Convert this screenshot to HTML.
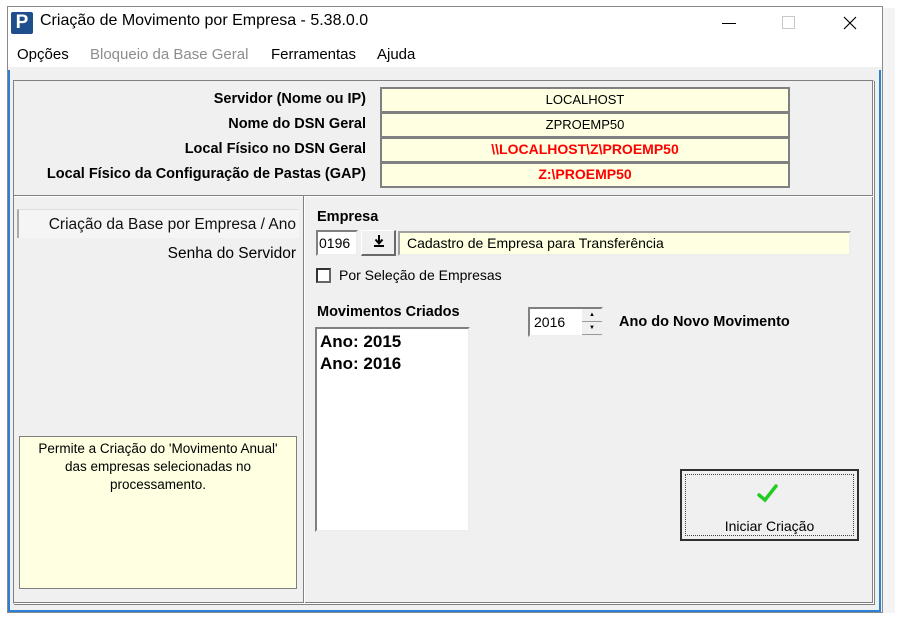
<!DOCTYPE html>
<html><head><meta charset="utf-8"><style>
*{margin:0;padding:0;box-sizing:border-box}
body{width:899px;height:619px;background:#fff;position:relative;overflow:hidden;font-family:"Liberation Sans",sans-serif;font-size:13px;color:#000}
.a{position:absolute}
.b{font-weight:bold}
.r{text-align:right}
.c{text-align:center}
.cell{position:absolute;left:380px;width:410px;height:26px;background:#ffffe1;border:2px solid #808080;text-align:center;line-height:21px;font-size:13px}
.red{color:#f00;font-weight:bold;font-size:14px}
.hl{font-size:14.5px}
</style></head><body>
<div class="a" style="left:7px;top:6px;width:876px;height:607px;border:1px solid #8a8a8a;background:#fff"></div>
<div class="a" style="left:883px;top:8px;width:12px;height:605px;background:#f4f4f4"></div>
<div class="a" style="left:11px;top:12px;width:22px;height:22px;background:#1f4e8c;border-radius:2px;color:#fff;font-weight:bold;font-size:19px;line-height:22px;text-align:center">P</div>
<div class="a" style="left:40px;top:12px;font-size:16px">Criação de Movimento por Empresa - 5.38.0.0</div>
<div class="a" style="left:722px;top:23px;width:14px;height:1px;background:#000"></div>
<div class="a" style="left:782px;top:16px;width:13px;height:13px;border:1px solid #c8c8c8"></div>
<svg class="a" style="left:843px;top:16px" width="14" height="14"><path d="M1 1L13 13M13 1L1 13" stroke="#000" stroke-width="1.2"/></svg>
<div class="a" style="left:17px;top:46px;font-size:15px">Opções</div>
<div class="a" style="left:90px;top:46px;font-size:15px;color:#8d8d8d">Bloqueio da Base Geral</div>
<div class="a" style="left:271px;top:46px;font-size:15px">Ferramentas</div>
<div class="a" style="left:377px;top:46px;font-size:15px">Ajuda</div>
<div class="a" style="left:8px;top:67px;width:874px;height:545px;background:#f0f0f0"></div>
<div class="a" style="left:8px;top:70px;width:2px;height:542px;background:#2b7fd4"></div>
<div class="a" style="left:879px;top:70px;width:2px;height:542px;background:#2b7fd4"></div>
<div class="a" style="left:8px;top:610px;width:873px;height:2px;background:#2b7fd4"></div>
<div class="a" style="left:13px;top:80px;width:861px;height:524px;border:1px solid #808080;border-right-color:#fff;border-bottom-color:#fff;box-shadow:inset -1px -1px 0 #808080,1px 1px 0 #808080"></div>
<div class="a b r hl" style="left:20px;width:346px;top:91px">Servidor (Nome ou IP)</div>
<div class="a b r hl" style="left:20px;width:346px;top:116px">Nome do DSN Geral</div>
<div class="a b r hl" style="left:20px;width:346px;top:141px">Local Físico no DSN Geral</div>
<div class="a b r hl" style="left:20px;width:346px;top:166px">Local Físico da Configuração de Pastas (GAP)</div>
<div class="cell" style="top:87px">LOCALHOST</div>
<div class="cell" style="top:112px">ZPROEMP50</div>
<div class="cell red" style="top:137px">\\LOCALHOST\Z\PROEMP50</div>
<div class="cell red" style="top:162px">Z:\PROEMP50</div>
<div class="a" style="left:14px;top:195px;width:859px;height:2px;border-top:1px solid #808080;border-bottom:1px solid #fff"></div>
<div class="a" style="left:303px;top:196px;width:2px;height:407px;border-left:1px solid #808080;border-right:1px solid #fff"></div>
<div class="a r" style="left:17px;top:209px;width:282px;height:29px;background:#f5f5f5;border-left:2px solid #aaa;border-top:1px solid #ddd;padding:6px 3px 0 0;font-size:15.5px;color:#111">Criação da Base por Empresa / Ano</div>
<div class="a r" style="left:17px;top:245px;width:279px;font-size:15.5px">Senha do Servidor</div>
<div class="a c" style="left:19px;top:436px;width:278px;height:153px;background:#ffffe1;border:1px solid #808080;padding-top:3px;line-height:18px;font-size:13.5px">Permite a Criação do 'Movimento Anual'<br>das empresas selecionadas no<br>processamento.</div>
<div class="a b" style="left:317px;top:209px;font-size:14.5px">Empresa</div>
<div class="a" style="left:316px;top:230px;width:42px;height:26px;background:#fff;border:2px solid #808080;border-right-color:#eee;border-bottom-color:#eee;padding:3px 0 0 1px;font-size:14px">0196</div>
<div class="a" style="left:361px;top:230px;width:35px;height:26px;background:#f0f0f0;border:1px solid #fff;border-right:2px solid #696969;border-bottom:2px solid #696969"></div>
<svg class="a" style="left:373px;top:234px" width="12" height="14"><path d="M6 1V9M2.5 5.5L6 9.5L9.5 5.5" stroke="#000" stroke-width="2" fill="none"/><path d="M1 12H11" stroke="#000" stroke-width="2"/></svg>
<div class="a" style="left:398px;top:231px;width:453px;height:25px;background:#ffffe1;border:2px solid #a0a0a0;border-right-color:#eee;border-bottom-color:#eee;padding:2px 0 0 7px;font-size:14px">Cadastro de Empresa para Transferência</div>
<div class="a" style="left:316px;top:268px;width:15px;height:15px;background:#fff;border:2px solid #333;border-right-color:#666;border-bottom-color:#666"></div>
<div class="a" style="left:339px;top:267px;font-size:14px">Por Seleção de Empresas</div>
<div class="a b" style="left:317px;top:304px;font-size:14.5px">Movimentos Criados</div>
<div class="a" style="left:315px;top:327px;width:155px;height:205px;background:#fff;border:2px solid #808080;border-right-color:#eee;border-bottom-color:#eee;padding:2px 0 0 3px;font-weight:bold;font-size:17px;line-height:22px">Ano: 2015<br>Ano: 2016</div>
<div class="a" style="left:528px;top:307px;width:75px;height:30px;background:#fff;border:2px solid #808080;border-right-color:#eee;border-bottom-color:#eee;padding:5px 0 0 4px;font-size:14px">2016</div>
<div class="a" style="left:582px;top:309px;width:20px;height:13px;background:#f0f0f0;border-bottom:1px solid #999;font-size:6px;text-align:center;line-height:12px">▲</div>
<div class="a" style="left:582px;top:322px;width:20px;height:13px;background:#f0f0f0;border-bottom:1px solid #999;font-size:6px;text-align:center;line-height:12px">▼</div>
<div class="a b" style="left:619px;top:314px;font-size:14.5px">Ano do Novo Movimento</div>
<div class="a" style="left:680px;top:469px;width:179px;height:72px;background:#f0f0f0;border:2px solid #303030"></div>
<div class="a" style="left:685px;top:474px;width:169px;height:62px;border:1px dotted #444"></div>
<svg class="a" style="left:757px;top:483px" width="22" height="22"><path d="M2 12L8 17L19 3" stroke="#22cc22" stroke-width="3.5" fill="none" stroke-linecap="round"/></svg>
<div class="a c" style="left:680px;top:518px;width:179px;font-size:14px">Iniciar Criação</div>
</body></html>
